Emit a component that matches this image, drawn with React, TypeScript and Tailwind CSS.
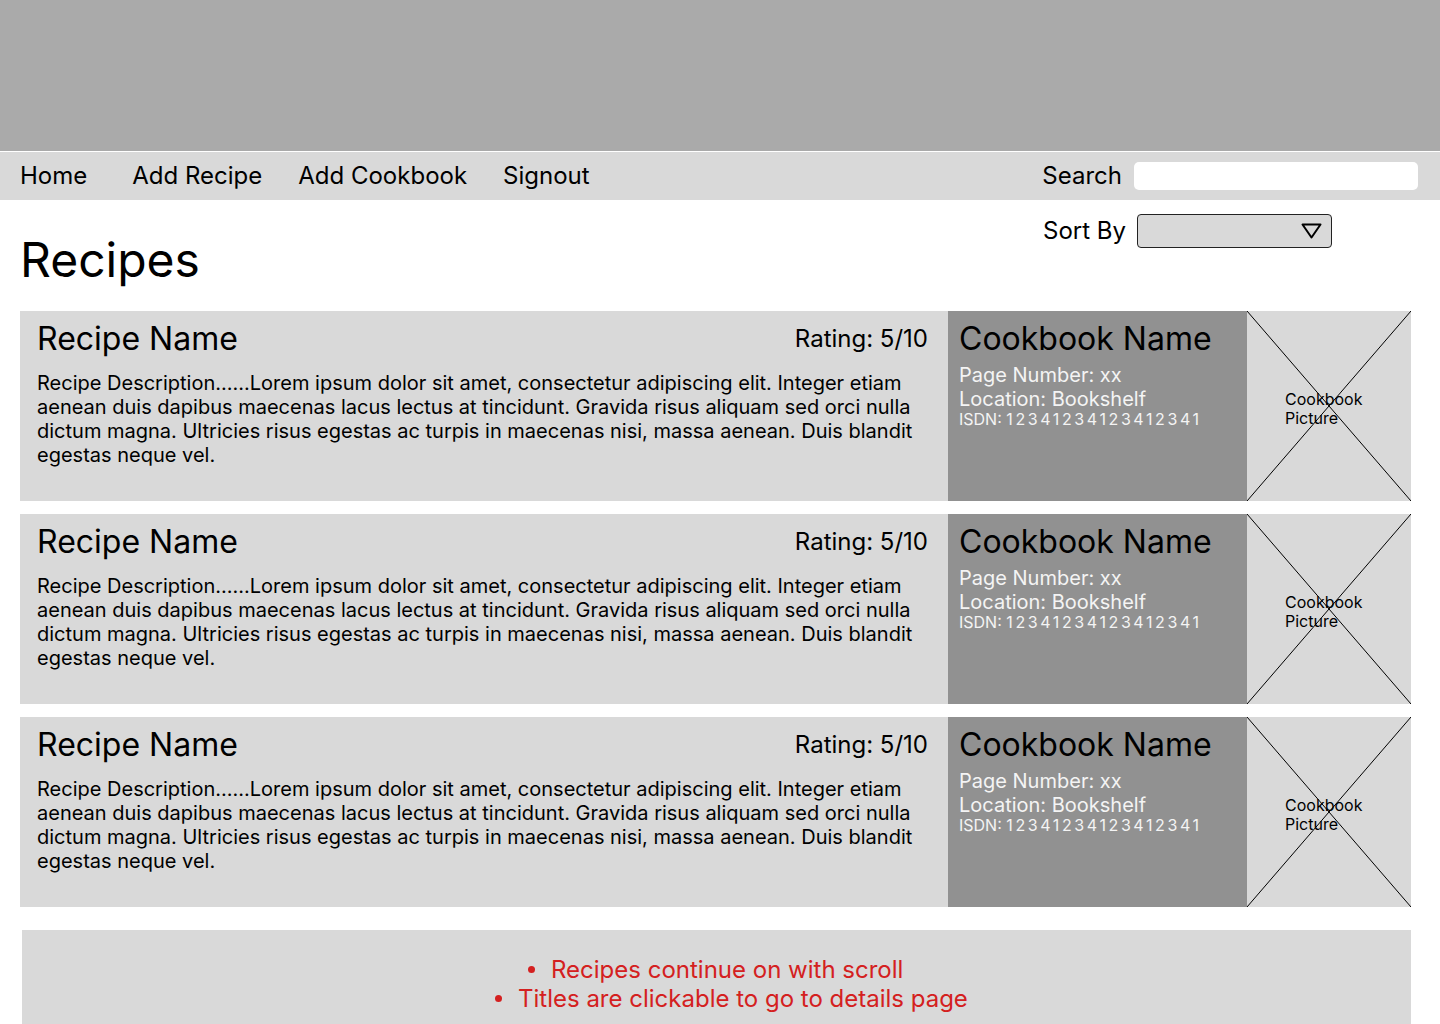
import React from "react";

const description =
  "Recipe Description......Lorem ipsum dolor sit amet, consectetur adipiscing elit. Integer etiam aenean duis dapibus maecenas lacus lectus at tincidunt. Gravida risus aliquam sed orci nulla dictum magna. Ultricies risus egestas ac turpis in maecenas nisi, massa aenean. Duis blandit egestas neque vel.";

const recipes = [1, 2, 3].map((id) => ({
  id,
  name: "Recipe Name",
  rating: "5/10",
  cookbook: "Cookbook Name",
  page: "xx",
  location: "Bookshelf",
  isdn: "12341234123412341",
}));

// wireframe notes, each line sits where the designer dropped it
const notes = [
  { text: "Recipes continue on with scroll", indent: "ml-[506px]" },
  { text: "Titles are clickable to go to details page", indent: "ml-[473px]" },
];

export default function App() {
  return (
    <div className="min-h-screen bg-white text-black" style={{ fontFamily: "Inter, 'Liberation Sans', sans-serif" }}>
      {/* Banner */}
      <div className="h-[151px] bg-[#aaaaaa]" />

      {/* Nav */}
      <nav className="flex h-[49px] items-center border-t border-white bg-[#d9d9d9] pl-[20px] pr-[22px] text-[24px]">
        <a className="mr-[45px]">Home</a>
        <a className="mr-[36px]">Add Recipe</a>
        <a className="mr-[36px]">Add Cookbook</a>
        <a>Signout</a>
        <div className="ml-auto flex items-center gap-[12px]">
          <span>Search</span>
          <div className="h-[28px] w-[284px] rounded-[5px] bg-white" />
        </div>
      </nav>

      <main className="px-[20px] pt-[13px]">
        <div className="flex items-start justify-between">
          <h1 className="mt-[18px] text-[48px] leading-[58px]">Recipes</h1>
          <div className="mr-[88px] flex items-center gap-[11px] text-[24px]">
            <span>Sort By</span>
            <div className="flex h-[34px] w-[195px] items-center justify-end rounded-[4px] border border-[#222] bg-[#d9d9d9] pr-[9px]">
              <svg width="21" height="16" viewBox="0 0 21 16" fill="none">
                <path d="M1.5 1.5 H19.5 L10.5 14.5 Z" stroke="black" strokeWidth="2" strokeLinejoin="round" />
              </svg>
            </div>
          </div>
        </div>

        <div className="mt-[22px] flex w-[1391px] flex-col gap-[13px]">
          {recipes.map((r) => (
            <RecipeCard key={r.id} recipe={r} />
          ))}
        </div>

        {/* Annotation */}
        <div className="ml-[2px] mt-[23px] flex h-[110px] w-[1389px] flex-col items-start bg-[#d9d9d9] pt-[25px] text-[24px] leading-[29px] text-[#d42020]">
          {notes.map((n) => (
            <div key={n.text} className={`flex items-center ${n.indent}`}>
              <span className="mr-[16px] h-[7px] w-[7px] rounded-full bg-[#d42020]" />
              <span>{n.text}</span>
            </div>
          ))}
        </div>
      </main>
    </div>
  );
}

function RecipeCard({ recipe }: { recipe: (typeof recipes)[number] }) {
  return (
    <div className="flex h-[190px]">
      <div className="w-[928px] bg-[#d9d9d9] pl-[17px] pr-[20px] pt-[8px]">
        <div className="flex items-center justify-between">
          <a className="text-[32px] leading-[39px]">{recipe.name}</a>
          <span className="text-[24px] leading-[29px]">Rating: {recipe.rating}</span>
        </div>
        <p className="mt-[13px] text-[20px] leading-[24px]">{description}</p>
      </div>

      <div className="w-[299px] bg-[#919191] pl-[11px] pt-[8px]">
        <div className="text-[32px] leading-[39px]">{recipe.cookbook}</div>
        <div className="mt-[5px] text-[20px] leading-[24px] text-[#f4f4f4]">
          <div>Page Number: {recipe.page}</div>
          <div>Location: {recipe.location}</div>
        </div>
        <div className="text-[16px] leading-[16px] text-[#f4f4f4]">
          ISDN: <span className="tracking-[2.6px]">{recipe.isdn}</span>
        </div>
      </div>

      <div className="relative flex w-[164px] items-center bg-[#d9d9d9] pl-[38px] text-[16px] leading-[19px]">
        <svg className="absolute inset-0 h-full w-full" viewBox="0 0 164 190" preserveAspectRatio="none">
          <line x1="0" y1="0" x2="164" y2="190" stroke="black" strokeWidth="1" vectorEffect="non-scaling-stroke" />
          <line x1="164" y1="0" x2="0" y2="190" stroke="black" strokeWidth="1" vectorEffect="non-scaling-stroke" />
        </svg>
        <span className="relative mt-[6px]">
          Cookbook
          <br />
          Picture
        </span>
      </div>
    </div>
  );
}
